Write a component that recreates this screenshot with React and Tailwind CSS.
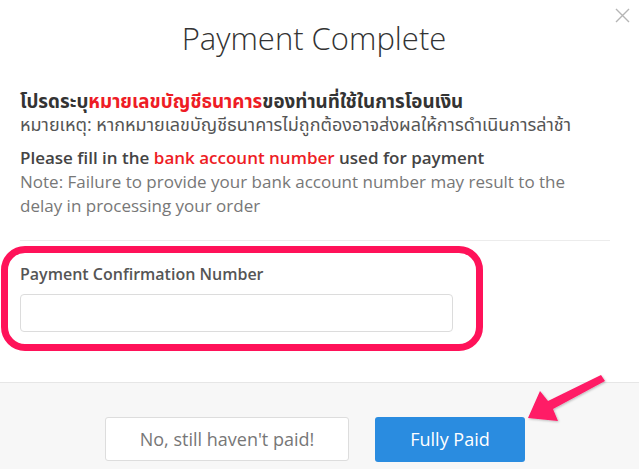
import React from "react";

export default function App() {
  const font = { fontFamily: '"Open Sans", "Noto Sans Thai", "Noto Sans", sans-serif' };
  return (
    <div className="relative w-[639px] h-[469px] overflow-hidden bg-white" style={font}>
      {/* close */}
      <button className="absolute left-[615px] top-[8px] w-[15px] h-[15px]">
        <svg width="15" height="15" viewBox="0 0 15 15">
          <path d="M1 1L14 14M14 1L1 14" stroke="#b5b5b5" strokeWidth="1.4" />
        </svg>
      </button>

      <div className="flex flex-col">
        <h1 className="mt-[19px] pr-[11px] text-center text-[31px] leading-[38px] font-light text-[#333]">
          Payment Complete
        </h1>

        <div className="mt-[33px] pl-[20px] w-[610px]">
          <p className="text-[18.8px] leading-[23px] font-bold text-[#333] whitespace-nowrap">
            โปรดระบุ<span className="text-[#ee1c25]">หมายเลขบัญชีธนาคาร</span>ของท่านที่ใช้ในการโอนเงิน
          </p>
          <p className="text-[18px] leading-[23px] text-[#555] whitespace-nowrap">
            หมายเหตุ: หากหมายเลขบัญชีธนาคารไม่ถูกต้องอาจส่งผลให้การดำเนินการล่าช้า
          </p>
          <p className="mt-[10px] text-[17px] leading-[24px] font-semibold text-[#444] whitespace-nowrap">
            Please fill in the <span className="text-[#ee1c25]">bank account number</span> used for payment
          </p>
          <p className="text-[17px] leading-[24px] text-[#777] whitespace-nowrap">
            Note: Failure to provide your bank account number may result to the
            <br />
            delay in processing your order
          </p>
        </div>

        <div className="mt-[22px] ml-[20px] w-[590px] h-px bg-[#ececec]" />

        <div className="mt-[5px] ml-[1px] w-[482px] h-[105px] border-[7px] border-[#ff1259] rounded-[24px] pl-[12px] pt-[10px]">
          <div className="text-[16px] leading-[22px] font-semibold text-[#555]">Payment Confirmation Number</div>
          <input
            type="text"
            className="mt-[9px] block w-[433px] h-[38px] border border-[#dcdcdc] rounded-[4px] bg-white outline-none"
          />
        </div>

        <div className="mt-[31px] h-[120px] border-t border-[#e6e6e6] bg-[#f7f7f7] flex justify-center gap-[26px] pr-[9px] pt-[34px]">
          <button className="w-[244px] h-[44px] bg-white border border-[#ddd] rounded-[3px] text-[18px] text-[#777]">
            No, still haven't paid!
          </button>
          <button className="w-[150px] h-[45px] bg-[#2a8ce0] rounded-[3px] text-[18px] text-white">
            Fully Paid
          </button>
        </div>
      </div>

      {/* annotation arrow */}
      <svg className="absolute left-0 top-0 pointer-events-none" width="639" height="469" viewBox="0 0 639 469">
        <defs>
          <filter id="sh" x="-20%" y="-20%" width="140%" height="140%">
            <feDropShadow dx="1" dy="1" stdDeviation="1" floodColor="#000" floodOpacity="0.25" />
          </filter>
        </defs>
        <polygon
          points="528,418 540,391 548,401 601,375 605,381 553,409 558,421"
          fill="#ff1a66"
          filter="url(#sh)"
        />
      </svg>
    </div>
  );
}
